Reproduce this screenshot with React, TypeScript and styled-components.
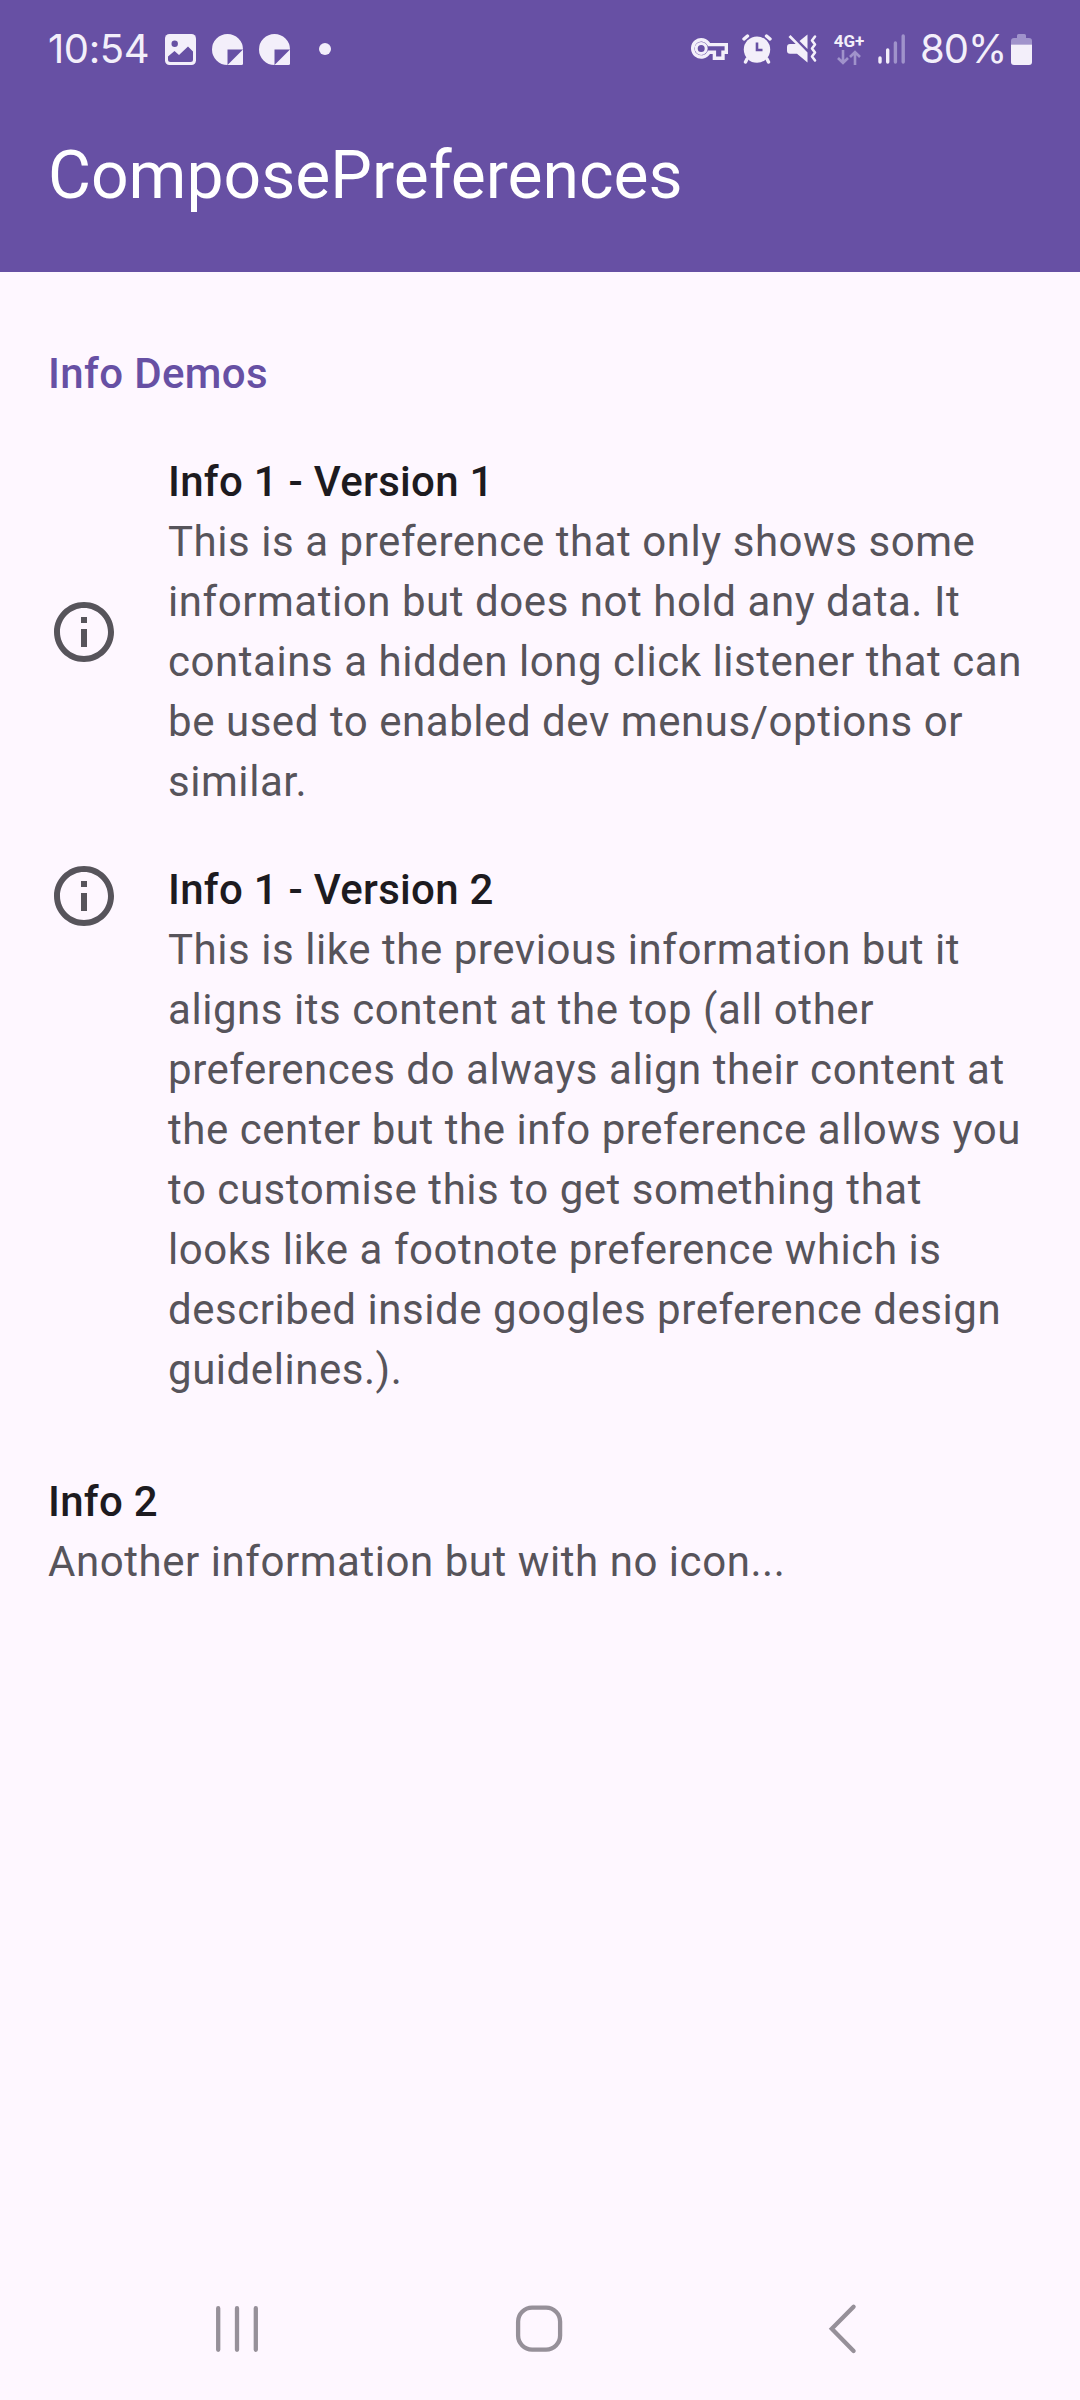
import React from "react";
import styled, { createGlobalStyle } from "styled-components";

const GlobalStyle = createGlobalStyle`
  * { box-sizing: border-box; }
  body {
    margin: 0;
    background: #fef7ff;
    font-family: Roboto, sans-serif;
  }
`;

const Screen = styled.div`
  display: flex;
  flex-direction: column;
  width: 1080px;
  height: 2400px;
  background: #fef7ff;
`;

const Header = styled.header`
  flex: none;
  background: #6750a4;
`;

const StatusBar = styled.div`
  display: flex;
  justify-content: space-between;
  height: 80px;
  padding: 0 48px;
  color: #f3effa;
`;

const StatusGroup = styled.div`
  display: flex;
  align-items: center;
  height: 98px;
`;

const StatusText = styled.span<{ $width: number; $gap?: number; $spacing: number }>`
  flex: none;
  width: ${(p) => p.$width}px;
  margin-left: ${(p) => p.$gap ?? 0}px;
  font-family: Inter, sans-serif;
  font-size: 40px;
  font-weight: 400;
  line-height: 48px;
  letter-spacing: ${(p) => p.$spacing}px;
  white-space: nowrap;
`;

const StatusIcon = styled.svg<{ $gap: number }>`
  display: block;
  flex: none;
  margin-left: ${(p) => p.$gap}px;
`;

const Network = styled.div`
  display: flex;
  flex: none;
  flex-direction: column;
  align-items: center;
  width: 34px;
  margin-left: 15px;
  font: 700 17px/17px Roboto, sans-serif;
`;

const AppBar = styled.div`
  display: flex;
  align-items: center;
  height: 192px;
  padding: 0 48px;
`;

const AppTitle = styled.h1`
  margin: 0;
  color: #ffffff;
  font-size: 66px;
  font-weight: 400;
  line-height: 84px;
`;

const Content = styled.main`
  flex: 1;
`;

const SectionTitle = styled.h2`
  margin: 0;
  padding: 72px 48px 24px;
  color: #6750a4;
  font-size: 42px;
  font-weight: 500;
  line-height: 60px;
  letter-spacing: 0.36px;
`;

const Preference = styled.section<{ $align?: string }>`
  display: flex;
  align-items: ${(p) => p.$align ?? "center"};
  gap: 48px;
  min-height: 216px;
  padding: 24px 48px;
`;

const PreferenceIcon = styled.svg`
  display: block;
  flex: none;
  width: 72px;
  height: 72px;
  fill: #57545b;
`;

const Title = styled.h3`
  margin: 0;
  color: #1d1b20;
  font-size: 42px;
  font-weight: 500;
  line-height: 60px;
  letter-spacing: 0.27px;
`;

const Summary = styled.p`
  margin: 0;
  color: #57545b;
  font-size: 42px;
  line-height: 60px;
  letter-spacing: 0.55px;
`;

const NavBar = styled.nav`
  display: grid;
  grid-template-columns: 303px 299px 72px;
  align-items: center;
  height: 144px;
  padding-left: 200px;
`;

const NavIcon = styled.svg`
  display: block;
  width: 72px;
  height: 72px;
  fill: none;
  stroke: #969099;
  stroke-width: 4.3;
  stroke-linecap: round;
`;

function InfoIcon() {
  return (
    <PreferenceIcon viewBox="0 0 24 24">
      <path d="M11 7h2v2h-2zm0 4h2v6h-2zm1-9C6.48 2 2 6.48 2 12s4.48 10 10 10 10-4.48 10-10S17.52 2 12 2zm0 18c-4.41 0-8-3.59-8-8s3.59-8 8-8 8 3.59 8 8-3.59 8-8 8z" />
    </PreferenceIcon>
  );
}

function NoteIcon() {
  return (
    <StatusIcon $gap={16} width="31" height="31" viewBox="0 0 31 31" fill="#f3effa">
      <path d="M15.5 0A15.5 15.5 0 0 0 15.5 31V15.5H31A15.5 15.5 0 0 0 15.5 0Z" />
      <path d="M31 15.5V29.5Q31 31 29.5 31H15.5Z" />
    </StatusIcon>
  );
}

interface Info {
  title: string;
  summary: string;
  icon?: boolean;
  align?: string;
}

const infos: Info[] = [
  {
    title: "Info 1 - Version 1",
    summary:
      "This is a preference that only shows some information but does not hold any data. It contains a hidden long click listener that can be used to enabled dev menus/options or similar.",
    icon: true,
  },
  {
    title: "Info 1 - Version 2",
    summary:
      "This is like the previous information but it aligns its content at the top (all other preferences do always align their content at the center but the info preference allows you to customise this to get something that looks like a footnote preference which is described inside googles preference design guidelines.).",
    icon: true,
    align: "flex-start",
  },
  { title: "Info 2", summary: "Another information but with no icon..." },
];

export default function App() {
  return (
    <Screen>
      <GlobalStyle />
      <Header>
        <StatusBar>
          <StatusGroup>
            <StatusText $width={101} $spacing={-0.4}>10:54</StatusText>
            <StatusIcon $gap={16} width="31" height="31" viewBox="0 0 31 31">
              <rect width="31" height="31" rx="4.5" fill="#f3effa" />
              <circle cx="9.7" cy="9.7" r="3.2" fill="#6750a4" />
              <path d="M3 22.5L9.5 17L14 21L23 12.5L28 17.5V25.5Q28 28 25.5 28H5.5Q3 28 3 25.5Z" fill="#6750a4" />
            </StatusIcon>
            <NoteIcon />
            <NoteIcon />
            <StatusIcon $gap={29} width="12" height="12" viewBox="0 0 12 12" fill="#f3effa">
              <circle cx="6" cy="6" r="6" />
            </StatusIcon>
          </StatusGroup>
          <StatusGroup>
            <StatusIcon $gap={0} width="37" height="22" viewBox="0 0 37 22" fill="none" stroke="#f3effa">
              <path d="M18 6.6H35.3V14.2H32V20.2H23.4V14.2H18A8.6 8.6 0 1 1 18 6.6Z" strokeWidth="3.4" />
              <circle cx="10.2" cy="10.4" r="5" strokeWidth="3" />
            </StatusIcon>
            <StatusIcon $gap={14} width="30" height="30" viewBox="0 0 30 30" fill="none" stroke="#f3effa" strokeWidth="3.4" strokeLinecap="round">
              <circle cx="15" cy="15.6" r="13.2" fill="#f3effa" stroke="none" />
              <path d="M2 5L5.5 2M28 5L24.5 2M5 25L3.5 28M25 25L26.5 28" />
              <path d="M15 8.5V16H20.5" stroke="#6750a4" strokeWidth="2.6" strokeLinecap="butt" />
            </StatusIcon>
            <StatusIcon $gap={15} width="30" height="30" viewBox="0 0 30 30" fill="#f3effa">
              <path d="M3 10H8.7L1.5 3L3.5 1L20.5 18.5V28.5L10 19.8H3Q0 19.8 0 16.8V13Q0 10 3 10Z" />
              <path d="M12.5 7L20.5 0.5V15Z" />
              <path d="M28 2.5L25 6.5L28 10.5L25 14.5L28 18.5L25 22.5L28 26.5" fill="none" stroke="#f3effa" strokeWidth="2.6" strokeLinecap="round" strokeLinejoin="round" />
            </StatusIcon>
            <Network>
              4G+
              <svg width="24" height="15" viewBox="0 0 24 15" fill="none" stroke="#a093cb" strokeWidth="2.6">
                <path d="M6 0V13M1 8L6 13L11 8M18 15V2M13 7L18 2L23 7" />
              </svg>
            </Network>
            <StatusIcon $gap={12} width="28" height="30" viewBox="0 0 28 30" fill="none" strokeWidth="3.4" strokeLinecap="round">
              <path d="M2 24V28M9.7 16V28" stroke="#f3effa" />
              <path d="M17.4 9V28M25.2 2V28" stroke="#a093cb" />
            </StatusIcon>
            <StatusText $width={88} $gap={14} $spacing={-1}>80%</StatusText>
            <StatusIcon $gap={3} width="21" height="31" viewBox="0 0 21 31">
              <path d="M6 4V1.5Q6 0 7.5 0H13.5Q15 0 15 1.5V4H18Q21 4 21 7V10.5H0V7Q0 4 3 4Z" fill="#a093cb" />
              <path d="M0 10.5H21V28Q21 31 18 31H3Q0 31 0 28Z" fill="#f3effa" />
            </StatusIcon>
          </StatusGroup>
        </StatusBar>
        <AppBar>
          <AppTitle>ComposePreferences</AppTitle>
        </AppBar>
      </Header>
      <Content>
        <SectionTitle>Info Demos</SectionTitle>
        {infos.map((info) => (
          <Preference key={info.title} $align={info.align}>
            {info.icon && <InfoIcon />}
            <div>
              <Title>{info.title}</Title>
              <Summary>{info.summary}</Summary>
            </div>
          </Preference>
        ))}
      </Content>
      <NavBar>
        <NavIcon viewBox="0 0 72 72">
          <path d="M18.2 16.2V57.8M37 16.2V57.8M55.8 16.2V57.8" />
        </NavIcon>
        <NavIcon viewBox="0 0 72 72">
          <rect x="15.1" y="15.6" width="42" height="42" rx="14" />
        </NavIcon>
        <NavIcon viewBox="0 0 72 72">
          <path d="M51.6 14.7L29.8 36.8L51.6 58.9" />
        </NavIcon>
      </NavBar>
    </Screen>
  );
}
